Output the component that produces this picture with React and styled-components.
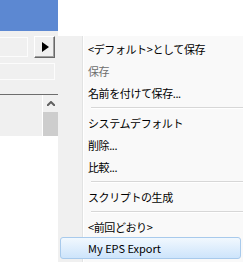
import styled, { createGlobalStyle } from 'styled-components';

const GlobalStyle = createGlobalStyle`
  html, body {
    margin: 0;
    padding: 0;
    background: #ffffff;
  }
  body {
    font-family: "Noto Sans CJK JP", "Noto Sans", sans-serif;
  }
`;

const menuItems = [
  { label: '<デフォルト>として保存' },
  { label: '保存', disabled: true },
  { label: '名前を付けて保存...' },
  { separator: true },
  { label: 'システムデフォルト' },
  { label: '削除...' },
  { label: '比較...' },
  { separator: true },
  { label: 'スクリプトの生成' },
  { separator: true },
  { label: '<前回どおり>' },
  { label: 'My EPS Export', active: true }
];

const App = () => {
  return (
    <Screen>
      <GlobalStyle />
      <Dialog>
        <TitleBar />
        <Panel>
          <FieldRow>
            <Field $width={28} $height={20} />
            <ArrowButton>
              <svg width="7" height="10" viewBox="0 0 7 10">
                <path d="M0 0 L7 5 L0 10 Z" fill="#000" />
              </svg>
            </ArrowButton>
          </FieldRow>
          <Field $width={55} $height={17} />
          <Rule />
          <ListBox>
            <ListArea />
            <ScrollBar>
              <ScrollButton>
                <svg width="8" height="5" viewBox="0 0 8 5">
                  <path d="M0 5 L4 1 L8 5" fill="none" stroke="#606060" strokeWidth="2" />
                </svg>
              </ScrollButton>
              <Thumb />
            </ScrollBar>
          </ListBox>
        </Panel>
      </Dialog>
      <Menu>
        {menuItems.map((item, i) =>
          item.separator ? (
            <Separator key={i} />
          ) : (
            <Item key={i} $disabled={item.disabled} $active={item.active}>
              {item.label}
            </Item>
          )
        )}
      </Menu>
    </Screen>
  );
};

const Screen = styled.div`
  width: 247px;
  height: 262px;
  overflow: hidden;
  display: flex;
  align-items: flex-start;
  background: #ffffff;
`;

const Dialog = styled.div`
  width: 58px;
  flex-shrink: 0;
  display: flex;
  flex-direction: column;
`;

const TitleBar = styled.div`
  height: 31px;
  background: #5c88d2;
`;

const Panel = styled.div`
  height: 105px;
  box-sizing: border-box;
  padding-top: 5px;
  background: #f0f0f0;
  display: flex;
  flex-direction: column;
`;

const FieldRow = styled.div`
  display: flex;
  align-items: center;
  gap: 6px;
  height: 22px;
`;

const Field = styled.div`
  width: ${(p) => p.$width}px;
  height: ${(p) => p.$height}px;
  box-sizing: border-box;
  border: 1px solid #fcfcfc;
  border-left: none;
  background: #f0f0f0;
  flex-shrink: 0;

  ${FieldRow} + & {
    margin-top: 5px;
  }
`;

const ArrowButton = styled.div`
  width: 21px;
  height: 22px;
  box-sizing: border-box;
  border-top: 1px solid #ffffff;
  border-left: 1px solid #ffffff;
  border-right: 1px solid #696969;
  border-bottom: 1px solid #696969;
  box-shadow: inset -1px -1px 0 #a0a0a0;
  background: #f0f0f0;
  display: flex;
  align-items: center;
  justify-content: center;
  padding-left: 1px;
`;

const Rule = styled.div`
  margin-top: 14px;
  height: 1px;
  background: #6d6d6d;
`;

const ListBox = styled.div`
  flex: 1;
  display: flex;
`;

const ListArea = styled.div`
  flex: 1;
  border-right: 1px solid #ffffff;
`;

const ScrollBar = styled.div`
  width: 15px;
  display: flex;
  flex-direction: column;
`;

const ScrollButton = styled.div`
  height: 17px;
  display: flex;
  align-items: center;
  justify-content: center;
`;

const Thumb = styled.div`
  flex: 1;
  background: #cdcdcd;
`;

const Menu = styled.div`
  margin-top: 36px;
  width: 185px;
  flex-shrink: 0;
  box-sizing: border-box;
  padding: 1px 2px 3px;
  background: linear-gradient(
    to right,
    #f0f0f0 0,
    #f0f0f0 24px,
    #e2e3e3 24px,
    #e2e3e3 25px,
    #ffffff 25px,
    #ffffff 26px,
    #f9f9f9 26px
  );
  display: flex;
  flex-direction: column;
`;

const Item = styled.div`
  height: 22px;
  box-sizing: border-box;
  padding-left: 28px;
  padding-top: 1px;
  display: flex;
  align-items: center;
  font-size: 11px;
  letter-spacing: -0.4px;
  color: ${(p) => (p.$disabled ? '#6d6d6d' : '#000000')};
  white-space: nowrap;
  ${(p) =>
    p.$active &&
    `
    border: 1px solid #a8caec;
    border-radius: 3px;
    padding-left: 27px;
    padding-top: 0;
    background: linear-gradient(to bottom, #f1f8fe, #cde4fb);
    letter-spacing: 0;
  `}
`;

const Separator = styled.div`
  height: 8px;
  margin-left: 31px;
  margin-right: -2px;
  display: flex;
  align-items: center;

  &::before {
    content: '';
    flex: 1;
    height: 1px;
    background: #d7d7d7;
    box-shadow: 0 1px 0 #ffffff;
  }
`;

export default App;
